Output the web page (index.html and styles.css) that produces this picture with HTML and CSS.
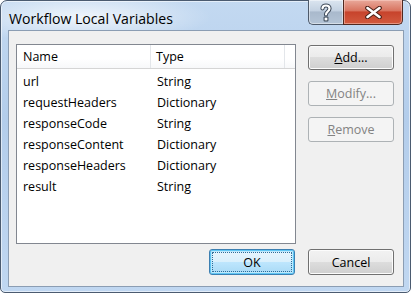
FILE: index.html
```html
<!DOCTYPE html>
<html lang="en">
<head>
    <meta charset="UTF-8">
    <title>Workflow Local Variables</title>
    <link rel="stylesheet" href="styles.css">
</head>
<body>

    <div class="window">
        <!-- Title bar -->
        <div class="titlebar">
            <span class="title">Workflow Local Variables</span>
        </div>

        <!-- Caption buttons sit over the frame -->
        <div class="caption-buttons">
            <div class="caption-btn help">
                <svg width="12" height="19" viewBox="0 0 12 19">
                    <path d="M2.5 5.5 C2.5 1.5 9.5 1.5 9.5 5.5 C9.5 8.5 6 8.5 6 11.5" fill="none" stroke="#3a4656" stroke-width="4.2" stroke-linecap="round"/>
                    <path d="M2.5 5.5 C2.5 1.5 9.5 1.5 9.5 5.5 C9.5 8.5 6 8.5 6 11.5" fill="none" stroke="#fff" stroke-width="2.2" stroke-linecap="round"/>
                    <rect x="3.6" y="13.6" width="4.8" height="4.8" rx="1" fill="#3a4656"/>
                    <rect x="4.6" y="14.6" width="2.8" height="2.8" fill="#fff"/>
                </svg>
            </div>
            <div class="caption-btn close">
                <svg width="17" height="13" viewBox="0 0 17 13">
                    <path d="M2.5 2 L14.5 11 M14.5 2 L2.5 11" stroke="#4a2018" stroke-width="4.6" stroke-linecap="round"/>
                    <path d="M2.5 2 L14.5 11 M14.5 2 L2.5 11" stroke="#fff" stroke-width="2.6" stroke-linecap="round"/>
                </svg>
            </div>
        </div>

        <!-- Client area -->
        <div class="client">
            <div class="main">
                <div class="listview">
                    <div class="lv-header">
                        <div class="lv-col col-name">Name</div>
                        <div class="lv-col col-type">Type</div>
                        <div class="lv-col col-fill"></div>
                    </div>
                    <div class="lv-rows">
                        <div class="lv-row"><span class="cell-name">url</span><span class="cell-type">String</span></div>
                        <div class="lv-row"><span class="cell-name">requestHeaders</span><span class="cell-type">Dictionary</span></div>
                        <div class="lv-row"><span class="cell-name">responseCode</span><span class="cell-type">String</span></div>
                        <div class="lv-row"><span class="cell-name">responseContent</span><span class="cell-type">Dictionary</span></div>
                        <div class="lv-row"><span class="cell-name">responseHeaders</span><span class="cell-type">Dictionary</span></div>
                        <div class="lv-row"><span class="cell-name">result</span><span class="cell-type">String</span></div>
                    </div>
                </div>

                <div class="side-buttons">
                    <button class="btn"><u>A</u>dd...</button>
                    <button class="btn" disabled><u>M</u>odify...</button>
                    <button class="btn" disabled><u>R</u>emove</button>
                </div>
            </div>

            <div class="footer">
                <button class="btn default">OK</button>
                <button class="btn">Cancel</button>
            </div>
        </div>
    </div>

</body>
</html>
```

FILE: styles.css
```css
body {
    margin: 0;
    font-family: "Open Sans", "Liberation Sans", sans-serif;
    font-size: 12.5px;
    color: #000;
}

.window {
    position: relative;
    box-sizing: border-box;
    width: 411px;
    height: 293px;
    padding: 0 6px 5px 7px;
    border: 1px solid #4b5b70;
    border-radius: 7px 7px 5px 5px;
    background: radial-gradient(ellipse 130px 26px at 80px 16px, rgba(255, 255, 255, 0.75), rgba(255, 255, 255, 0) 100%),
                linear-gradient(to bottom, #c3d9f1 0%, #b3cdeb 40%, #c0d7f1 100%);
    box-shadow: inset 0 0 0 1px rgba(255, 255, 255, 0.55);
}

.titlebar {
    height: 29px;
    box-sizing: border-box;
    padding: 8px 0 0 1px;
}

.title {
    font-size: 14.1px;
    line-height: 20px;
    color: #000;
}

/* Caption buttons */
.caption-buttons {
    position: absolute;
    top: -1px;
    right: 7px;
    display: flex;
    height: 25px;
}

.caption-btn {
    box-sizing: border-box;
    height: 25px;
    display: flex;
    align-items: center;
    justify-content: center;
    border: 1px solid #4e5a6a;
    border-top: none;
}

.caption-btn.help {
    width: 35px;
    border-right: none;
    border-radius: 0 0 0 5px;
    background: linear-gradient(to bottom, #dbe5f0 0%, #c3d1e1 45%, #a9b9cc 50%, #b4c4d6 100%);
    box-shadow: inset 0 0 0 1px rgba(255, 255, 255, 0.45);
}

.caption-btn.close {
    width: 60px;
    border-color: #50281f;
    border-radius: 0 0 5px 0;
    background: linear-gradient(to bottom, #e9a99b 0%, #d8735f 45%, #c7432c 50%, #d25a3f 100%);
    box-shadow: inset 0 0 0 1px rgba(255, 220, 210, 0.45);
}

.caption-btn svg {
    display: block;
}

/* Client area */
.client {
    box-sizing: border-box;
    width: 396px;
    height: 257px;
    border: 1px solid #8b9db3;
    background-color: #f0f0f0;
    padding: 13px 9px 11px 7px;
}

.main {
    display: flex;
    height: 200px;
}

.listview {
    box-sizing: border-box;
    width: 280px;
    height: 200px;
    border: 1px solid #828790;
    background-color: #fff;
}

.lv-header {
    display: flex;
    box-sizing: border-box;
    height: 24px;
    border-bottom: 1px solid #d5d5d5;
    background: linear-gradient(to bottom, #ffffff 0%, #ffffff 60%, #f7f8fa 100%);
}

.lv-col {
    box-sizing: border-box;
    line-height: 23px;
    border-right: 1px solid #e3e6ea;
}

.col-name {
    width: 134px;
    padding-left: 6px;
}

.col-type {
    width: 134px;
    padding-left: 5px;
}

.col-fill {
    flex: 1;
    border-right: none;
}

.lv-rows {
    padding-top: 2px;
}

.lv-row {
    display: flex;
    height: 21px;
    line-height: 21px;
}

.cell-name {
    box-sizing: border-box;
    width: 134px;
    padding-left: 6px;
}

.cell-type {
    padding-left: 6px;
}

/* Buttons */
.side-buttons {
    display: flex;
    flex-direction: column;
    gap: 11px;
    margin-left: 12px;
    padding-top: 1px;
}

.btn {
    position: relative;
    box-sizing: border-box;
    width: 86px;
    height: 25px;
    padding: 0;
    font-family: inherit;
    font-size: 12.5px;
    color: #000;
    border: 1px solid #707070;
    border-radius: 3px;
    background: linear-gradient(to bottom, #f2f2f2 0%, #ebebeb 50%, #dddddd 50%, #cfcfcf 100%);
    box-shadow: inset 0 0 0 1px #fcfcfc;
}

.btn u {
    text-underline-offset: 1px;
}

.btn:disabled {
    color: #838383;
    border-color: #adb2b5;
    background: #f4f4f4;
    box-shadow: none;
}

.footer {
    display: flex;
    justify-content: flex-end;
    gap: 13px;
    margin-top: 5px;
}

.footer .btn {
    height: 26px;
}

.btn.default {
    border-color: #3c7fb1;
    background: linear-gradient(to bottom, #eaf6fd 0%, #d9f0fc 50%, #bee6fd 50%, #a7d9f5 100%);
    box-shadow: inset 0 0 0 1px #5fc6f4, inset 0 0 0 2px #bde8fc;
}

.btn.default::after {
    content: "";
    position: absolute;
    left: 2px;
    top: 2px;
    right: 2px;
    bottom: 2px;
    border: 1px dotted #2d6d99;
    border-radius: 1px;
}
```
